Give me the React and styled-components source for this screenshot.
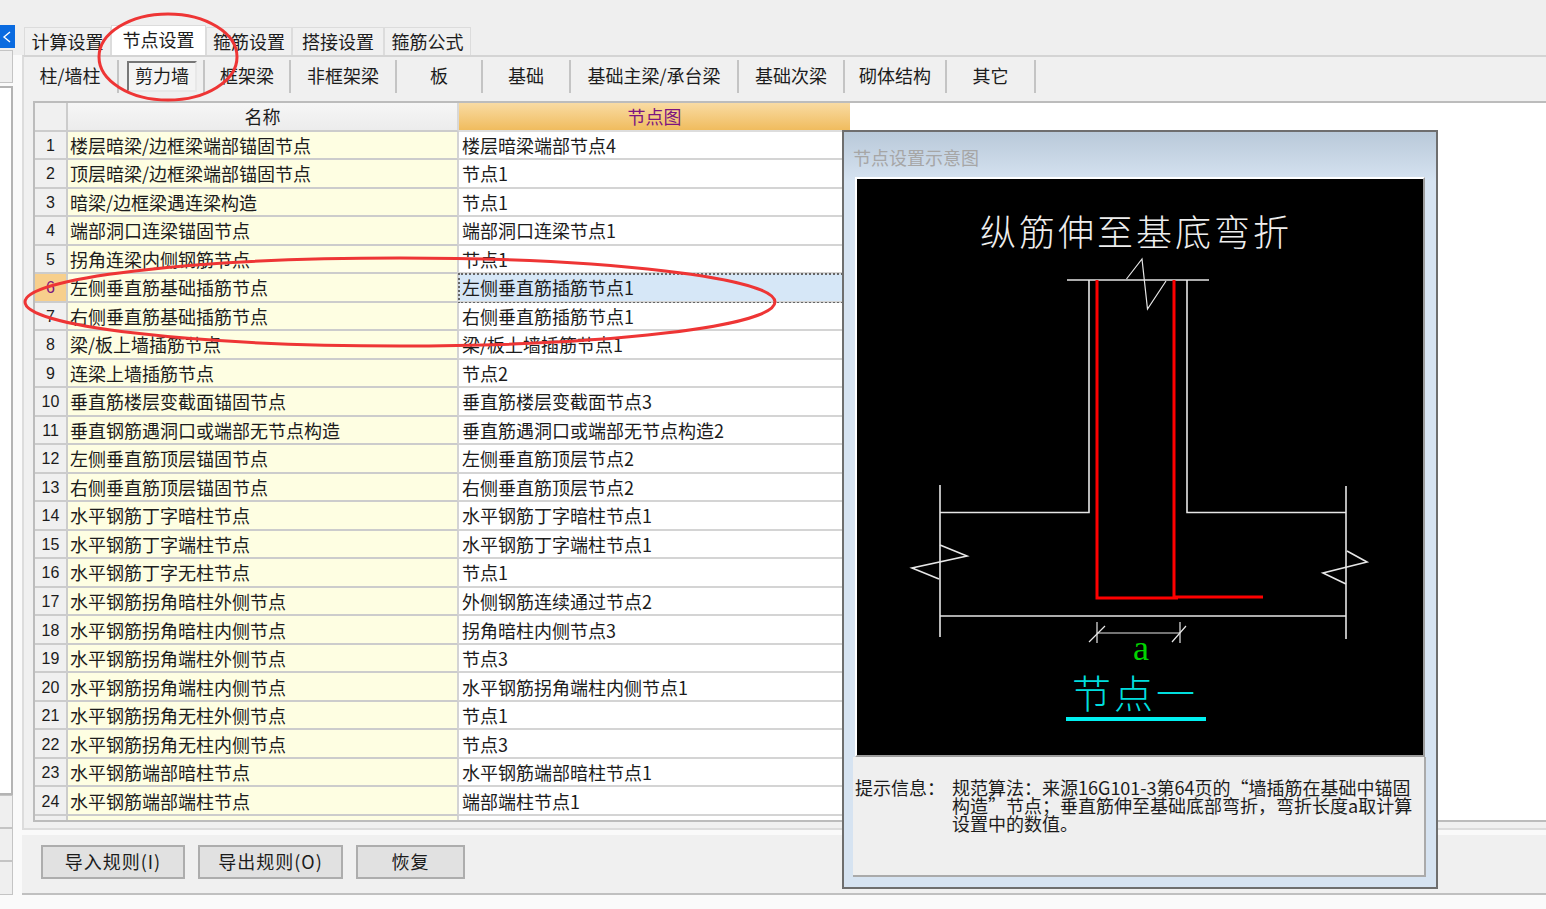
import React from 'react';
import styled, { createGlobalStyle } from 'styled-components';

const CJK = `'Noto Sans CJK SC', 'Liberation Sans', sans-serif`;

const TABS = [
  { label: '计算设置', width: 87 },
  { label: '节点设置', width: 95, active: true },
  { label: '箍筋设置', width: 86 },
  { label: '搭接设置', width: 92 },
  { label: '箍筋公式', width: 87 },
];

const SUB_TABS = [
  { label: '柱/墙柱', width: 92 },
  { label: '剪力墙', width: 86, pressed: true },
  { label: '框架梁', width: 86 },
  { label: '非框架梁', width: 106 },
  { label: '板', width: 86 },
  { label: '基础', width: 88 },
  { label: '基础主梁/承台梁', width: 168 },
  { label: '基础次梁', width: 106 },
  { label: '砌体结构', width: 102 },
  { label: '其它', width: 89 },
];

const ROWS = [
  ['楼层暗梁/边框梁端部锚固节点', '楼层暗梁端部节点4'],
  ['顶层暗梁/边框梁端部锚固节点', '节点1'],
  ['暗梁/边框梁遇连梁构造', '节点1'],
  ['端部洞口连梁锚固节点', '端部洞口连梁节点1'],
  ['拐角连梁内侧钢筋节点', '节点1'],
  ['左侧垂直筋基础插筋节点', '左侧垂直筋插筋节点1'],
  ['右侧垂直筋基础插筋节点', '右侧垂直筋插筋节点1'],
  ['梁/板上墙插筋节点', '梁/板上墙插筋节点1'],
  ['连梁上墙插筋节点', '节点2'],
  ['垂直筋楼层变截面锚固节点', '垂直筋楼层变截面节点3'],
  ['垂直钢筋遇洞口或端部无节点构造', '垂直筋遇洞口或端部无节点构造2'],
  ['左侧垂直筋顶层锚固节点', '左侧垂直筋顶层节点2'],
  ['右侧垂直筋顶层锚固节点', '右侧垂直筋顶层节点2'],
  ['水平钢筋丁字暗柱节点', '水平钢筋丁字暗柱节点1'],
  ['水平钢筋丁字端柱节点', '水平钢筋丁字端柱节点1'],
  ['水平钢筋丁字无柱节点', '节点1'],
  ['水平钢筋拐角暗柱外侧节点', '外侧钢筋连续通过节点2'],
  ['水平钢筋拐角暗柱内侧节点', '拐角暗柱内侧节点3'],
  ['水平钢筋拐角端柱外侧节点', '节点3'],
  ['水平钢筋拐角端柱内侧节点', '水平钢筋拐角端柱内侧节点1'],
  ['水平钢筋拐角无柱外侧节点', '节点1'],
  ['水平钢筋拐角无柱内侧节点', '节点3'],
  ['水平钢筋端部暗柱节点', '水平钢筋端部暗柱节点1'],
  ['水平钢筋端部端柱节点', '端部端柱节点1'],
];

const SELECTED_ROW = 5;

function NodeDiagram() {
  return (
    <DiagramSvg viewBox="857 179 566 576">
      <DiagramTitle x="1136" y="246">纵筋伸至基底弯折</DiagramTitle>
      <g fill="none" stroke="#e6e6e6" strokeWidth="1.6">
        <path d="M1067 280H1209" />
        <path d="M1126.500 279L1142 259L1147.500 309L1166 281" strokeWidth="1.2" />
        <path d="M1089 280V512.500H940" />
        <path d="M1187 280V512.500H1346" />
        <path d="M940 485V637" />
        <path d="M1346 486V639" />
        <path d="M940 616H1346" />
        <path d="M940 545L967 556L912 568L939 579" />
        <path d="M1347 551L1367 562L1323 573L1346 584" />
        <path d="M1097 622V643M1180 622V643M1097 633H1180" strokeWidth="1.2" />
        <path d="M1089 642L1105 626M1172 642L1186 626" strokeWidth="1.2" />
      </g>
      <g fill="none" stroke="#ff0000" strokeWidth="3">
        <path d="M1097 280V598H1178" />
        <path d="M1174 280V597H1263" />
      </g>
      <DimLabel x="1141" y="660">a</DimLabel>
      <NodeName x="1135" y="708">节点一</NodeName>
      <rect x="1066" y="717" width="140" height="4" fill="#00f0f0" />
    </DiagramSvg>
  );
}

function App() {
  return (
    <Page>
      <GlobalStyle />
      <LeftRail>
        <CollapseTab>
          <svg width="10" height="14" viewBox="0 0 10 14">
            <path d="M8 2L2 7L8 12" fill="none" stroke="#fff" strokeWidth="1.4" />
          </svg>
        </CollapseTab>
        <RailBox $height={33} />
        <RailList />
        <RailBox $height={33} />
        <RailBox $height={33} />
        <RailBox $height={34} />
      </LeftRail>

      <Main>
        <TabBar>
          {TABS.map((tab) => (
            <Tab key={tab.label} $width={tab.width} $active={tab.active}>
              {tab.label}
            </Tab>
          ))}
        </TabBar>

        <Panel>
          <SubTabBar>
            {SUB_TABS.map((tab) => (
              <SubTab key={tab.label} $width={tab.width}>
                {tab.pressed ? <PressedLabel>{tab.label}</PressedLabel> : tab.label}
              </SubTab>
            ))}
          </SubTabBar>

          <TableArea>
            <Table>
              <HeaderCorner />
              <NameHeader>名称</NameHeader>
              <ValueHeader>节点图</ValueHeader>
              {ROWS.map(([name, value], index) => (
                <React.Fragment key={name}>
                  <NumberCell $selected={index === SELECTED_ROW}>{index + 1}</NumberCell>
                  <NameCell>{name}</NameCell>
                  <ValueCell $selected={index === SELECTED_ROW}>{value}</ValueCell>
                </React.Fragment>
              ))}
              <FillerNumber />
              <FillerName />
              <FillerValue />
            </Table>
          </TableArea>
        </Panel>

        <ButtonBar>
          <RuleButton $width={144}>导入规则(I)</RuleButton>
          <RuleButton $width={145}>导出规则(O)</RuleButton>
          <RuleButton $width={109}>恢复</RuleButton>
        </ButtonBar>
      </Main>

      <PreviewDialog>
        <DialogTitle>节点设置示意图</DialogTitle>
        <Canvas>
          <NodeDiagram />
        </Canvas>
        <InfoPanel>
          <InfoLabel>提示信息：</InfoLabel>
          <InfoText>
            <div>规范算法：来源16G101-3第64页的“墙插筋在基础中锚固</div>
            <div>构造”节点；垂直筋伸至基础底部弯折，弯折长度a取计算</div>
            <div>设置中的数值。</div>
          </InfoText>
        </InfoPanel>
      </PreviewDialog>

      <Annotations viewBox="0 0 1546 909">
        <ellipse cx="168" cy="57" rx="69" ry="43" />
        <ellipse cx="400" cy="302" rx="375" ry="44" />
      </Annotations>
    </Page>
  );
}

export default App;

const GlobalStyle = createGlobalStyle`
  html, body {
    margin: 0;
    padding: 0;
    background-color: #fafafa;
  }

  * {
    box-sizing: border-box;
  }
`;

const Page = styled.div`
  position: relative;
  width: 1546px;
  height: 909px;
  overflow: hidden;

  display: flex;
  gap: 9px;

  font-family: ${CJK};
  font-size: 18px;
  color: #1c1c1c;
  background: linear-gradient(#efefef 0, #efefef 55px, #fafafa 55px);
`;

const LeftRail = styled.div`
  width: 13px;
  height: 895px;
  padding-top: 25px;
  flex-shrink: 0;

  display: flex;
  flex-direction: column;
`;

const CollapseTab = styled.div`
  width: 15px;
  height: 23px;
  margin-bottom: 2px;
  padding-left: 2px;
  flex-shrink: 0;

  background-color: #0a6be0;

  display: flex;
  align-items: center;
`;

const RailBox = styled.div`
  height: ${({ $height }) => $height}px;
  flex-shrink: 0;

  background-color: #efefef;
  border: 1px solid #c4c4c4;
  border-left: none;
`;

const RailList = styled.div`
  height: 710px;
  margin-top: 3px;

  background-color: #ffffff;
  border: 2px solid #b4b4b4;
  border-left: none;
`;

const Main = styled.div`
  width: 1524px;
  padding-top: 27px;

  display: flex;
  flex-direction: column;
`;

const TabBar = styled.div`
  height: 28px;
  padding-left: 2px;

  display: flex;
  align-items: flex-end;
`;

const Tab = styled.div`
  width: ${({ $width }) => $width}px;
  height: ${({ $active }) => ($active ? 30 : 28)}px;
  padding-bottom: ${({ $active }) => ($active ? 4 : 2)}px;

  background-color: ${({ $active }) => ($active ? '#ffffff' : '#f0f0f0')};
  border: 1px solid #dcdcdc;
  border-bottom: none;

  display: flex;
  justify-content: center;
  align-items: center;
`;

const Panel = styled.div`
  height: 775px;

  background-color: #f0f0f0;
  border-top: 2px solid #d4d4d4;
  border-left: 2px solid #dcdcdc;
  border-bottom: 2px solid #dcdcdc;
`;

const SubTabBar = styled.div`
  height: 44px;
  padding: 3px 0 8px 4px;

  display: flex;
`;

const SubTab = styled.div`
  width: ${({ $width }) => $width}px;
  height: 33px;
  padding-bottom: 4px;

  border-right: 2px solid #c4c4c4;

  display: flex;
  justify-content: center;
  align-items: center;

  &:first-child {
    width: ${({ $width }) => $width - 1}px;
    padding-right: 5px;
  }
`;

const PressedLabel = styled.div`
  width: 70px;
  height: 31px;
  margin: 4px 0 0 2px;
  padding-bottom: 3px;

  background-color: #f4f4f4;
  border: 2px solid #e8e8e8;
  border-top-color: #777777;
  border-left-color: #777777;

  display: flex;
  justify-content: center;
  align-items: center;
`;

const TableArea = styled.div`
  height: 721px;
  margin-left: 9px;

  background-color: #ffffff;
  border-top: 2px solid #bcbcbc;
  border-left: 2px solid #bcbcbc;
  border-bottom: 2px solid #bcbcbc;
`;

const Table = styled.div`
  width: 815px;

  display: grid;
  grid-template-columns: 33px 391px 391px;
  grid-template-rows: 28.5px repeat(24, 28.52px) 4.5px;
`;

const HeaderCorner = styled.div`
  background-color: #f0f0f0;
  border-bottom: 2px solid #cccccc;
  border-right: 2px solid #cccccc;
`;

const NameHeader = styled.div`
  background: linear-gradient(#f6f6f6, #ececec);
  border-bottom: 2px solid #cccccc;
  border-right: 2px solid #d8d8d8;

  display: flex;
  justify-content: center;
  align-items: center;
`;

const ValueHeader = styled.div`
  color: #7c1580;
  background: linear-gradient(#f9dba3, #f0bc5e);
  border-bottom: 2px solid #dddddd;

  display: flex;
  justify-content: center;
  align-items: center;
`;

const NumberCell = styled.div`
  padding-top: 2px;

  font-family: 'Liberation Sans', sans-serif;
  font-size: 16px;
  color: ${({ $selected }) => ($selected ? '#7c1580' : '#1c1c1c')};

  background-color: ${({ $selected }) => ($selected ? '#f7cf8c' : '#f0f0f0')};
  border-bottom: 2px solid #cccccc;
  border-right: 2px solid #cccccc;

  display: flex;
  justify-content: center;
  align-items: center;
`;

const NameCell = styled.div`
  padding-left: 2px;

  white-space: nowrap;
  background-color: #fefee2;
  border-bottom: 2px solid #cccccc;
  border-right: 2px solid #d4d4d4;

  display: flex;
  align-items: center;
`;

const ValueCell = styled.div`
  padding-left: 3px;

  white-space: nowrap;
  background-color: ${({ $selected }) => ($selected ? '#d6e7f7' : '#ffffff')};
  border-bottom: 2px solid #d4d4d4;
  outline: ${({ $selected }) => ($selected ? '2px dotted #666666' : 'none')};
  outline-offset: -1px;

  display: flex;
  align-items: center;
`;

const FillerNumber = styled.div`
  background-color: #f0f0f0;
  border-right: 2px solid #cccccc;
`;

const FillerName = styled.div`
  background-color: #fefee2;
  border-right: 2px solid #d4d4d4;
`;

const FillerValue = styled.div`
  background-color: #ffffff;
`;

const ButtonBar = styled.div`
  height: 60px;
  margin-top: 5px;
  padding: 10px 0 0 19px;

  background-color: #f0f0f0;
  border-bottom: 2px solid #c0c0c0;

  display: flex;
  align-items: flex-start;
  gap: 13px;
`;

const RuleButton = styled.div`
  width: ${({ $width }) => $width}px;
  height: 34px;
  padding-bottom: 3px;

  letter-spacing: 1px;
  background-color: #e1e1e1;
  border: 2px solid #adadad;

  display: flex;
  justify-content: center;
  align-items: center;
`;

const PreviewDialog = styled.div`
  position: absolute;
  left: 842px;
  top: 130px;
  width: 596px;
  height: 759px;

  background: linear-gradient(#b9c9d9 0, #d6e3f1 50px, #d6e3f1 100%);
  border: 2px solid #6e6e6e;

  display: flex;
  flex-direction: column;
`;

const DialogTitle = styled.div`
  height: 45px;
  padding: 13px 0 0 9px;

  line-height: 24px;
  color: #a6a6a6;
`;

const Canvas = styled.div`
  width: 570px;
  height: 580px;
  margin-left: 11px;

  background-color: #000000;
  border: 2px solid #ffffff;
  border-right-color: #9c9c9c;
  border-bottom-color: #9c9c9c;
`;

const DiagramSvg = styled.svg`
  display: block;
  width: 566px;
  height: 576px;
`;

const DiagramTitle = styled.text`
  font-family: ${CJK};
  font-size: 36px;
  font-weight: 300;
  letter-spacing: 3px;
  fill: #eeeeee;
  text-anchor: middle;
`;

const DimLabel = styled.text`
  font-family: 'Liberation Serif', serif;
  font-size: 36px;
  fill: #00d400;
  text-anchor: middle;
`;

const NodeName = styled.text`
  font-family: ${CJK};
  font-size: 39px;
  font-weight: 300;
  letter-spacing: 3px;
  fill: #00dede;
  text-anchor: middle;
`;

const InfoPanel = styled.div`
  width: 573px;
  height: 120px;
  margin-left: 9px;
  padding: 21px 0 0 2px;

  background-color: #efefef;
  border-right: 2px solid #aaaaaa;
  border-bottom: 2px solid #aaaaaa;

  display: flex;
  line-height: 18px;
`;

const InfoLabel = styled.div`
  width: 97px;
  flex-shrink: 0;
`;

const InfoText = styled.div`
  white-space: nowrap;
`;

const Annotations = styled.svg`
  position: absolute;
  left: 0;
  top: 0;
  width: 1546px;
  height: 909px;
  pointer-events: none;

  fill: none;
  stroke: #ee3535;
  stroke-width: 3;
`;
